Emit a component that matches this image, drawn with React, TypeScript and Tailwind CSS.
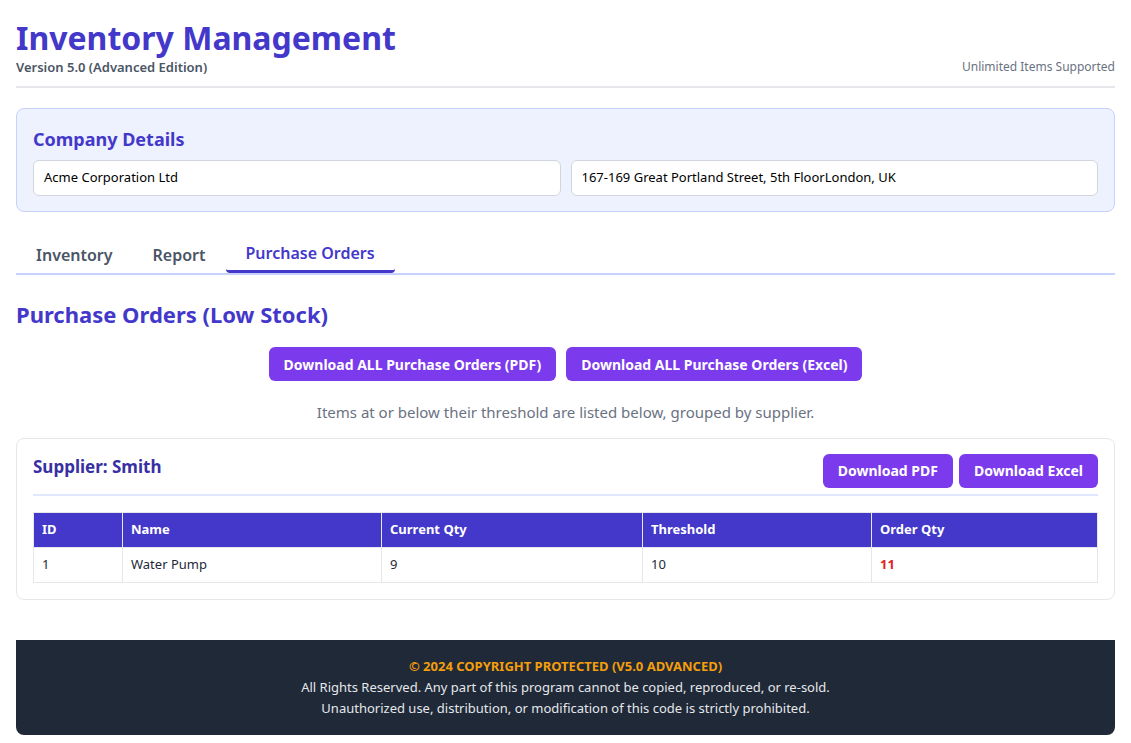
export default function App() {
  const btn = "bg-[#7c3aed] text-white font-bold text-[14px] rounded-md px-[15px] h-[34px] [font-family:'Liberation_Sans',Arial,sans-serif]";
  return (
    <div className="min-h-screen bg-white px-4 [font-family:'Noto_Sans',sans-serif] text-gray-800">
      <div className="pt-[18px] flex items-end justify-between border-b-2 border-gray-200 pb-[10px]">
        <div>
          <h1 className="text-[32px] leading-[40px] font-bold text-[#4338ca]">Inventory Management</h1>
          <div className="text-[13px] font-semibold text-gray-600 leading-[18px]">Version 5.0 (Advanced Edition)</div>
        </div>
        <div className="text-[12px] text-gray-500">Unlimited Items Supported</div>
      </div>
      <div className="mt-5 bg-[#eef2ff] border border-[#c7d2fe] rounded-lg px-4 pt-[17px] pb-[15px]">
        <h2 className="text-[18px] font-bold text-[#4338ca] leading-[26px] mb-[8px]">Company Details</h2>
        <div className="flex gap-[10px]">
          <div className="flex-1 h-[36px] bg-white border border-gray-300 rounded-md px-[10px] flex items-center text-[13px] text-black [font-family:'Liberation_Sans',Arial,sans-serif]">Acme Corporation Ltd</div>
          <div className="flex-1 h-[36px] bg-white border border-gray-300 rounded-md px-[10px] flex items-center text-[13px] text-black [font-family:'Liberation_Sans',Arial,sans-serif]">167-169 Great Portland Street, 5th FloorLondon, UK</div>
        </div>
      </div>
      <div className="mt-[24px] flex border-b-2 border-[#c7d2fe] text-[16px] font-semibold">
        <div className="px-5 h-[37px] flex items-center text-gray-600">Inventory</div>
        <div className="px-5 h-[37px] flex items-center text-gray-600">Report</div>
        <div className="px-5 h-[37px] flex items-center text-[#4338ca] border-b-[3px] border-[#4338ca] rounded-b-sm -mb-[2px]">Purchase Orders</div>
      </div>
      <h2 className="mt-[24px] text-[22px] font-bold text-[#4338ca] leading-[30px]">Purchase Orders (Low Stock)</h2>
      <div className="mt-[18px] flex justify-center gap-[10px]">
        <button className={btn}>Download ALL Purchase Orders (PDF)</button>
        <button className={btn}>Download ALL Purchase Orders (Excel)</button>
      </div>
      <p className="mt-[20px] text-center text-[15px] text-gray-500">Items at or below their threshold are listed below, grouped by supplier.</p>
      <div className="mt-[14px] border border-gray-200 rounded-lg px-4 pt-[15px] pb-[16px]">
        <div className="flex justify-between items-start border-b-2 border-[#e0e7ff] pb-[6px]">
          <h3 className="text-[17px] font-bold text-[#3730a3] leading-[26px]">Supplier: Smith</h3>
          <div className="flex gap-[6px]">
            <button className={btn}>Download PDF</button>
            <button className={btn}>Download Excel</button>
          </div>
        </div>
        <table className="mt-[16px] w-full border-collapse text-[13px]">
          <thead>
            <tr className="bg-[#4338ca] text-white text-left h-[35px]">
              <th className="px-2 border border-gray-200 w-[89px]">ID</th>
              <th className="px-2 border border-gray-200 w-[259px]">Name</th>
              <th className="px-2 border border-gray-200 w-[261px]">Current Qty</th>
              <th className="px-2 border border-gray-200 w-[229px]">Threshold</th>
              <th className="px-2 border border-gray-200">Order Qty</th>
            </tr>
          </thead>
          <tbody>
            <tr className="h-[35px]">
              <td className="px-2 border border-gray-200">1</td>
              <td className="px-2 border border-gray-200">Water Pump</td>
              <td className="px-2 border border-gray-200">9</td>
              <td className="px-2 border border-gray-200">10</td>
              <td className="px-2 border border-gray-200 text-[#dc2626] font-bold">11</td>
            </tr>
          </tbody>
        </table>
      </div>
      <footer className="mt-[40px] bg-[#1f2937] rounded-b-lg py-[16px] text-center text-[13px] leading-[21px] text-gray-200">
        <div className="font-bold text-[#f59e0b]">© 2024 COPYRIGHT PROTECTED (V5.0 ADVANCED)</div>
        <div>All Rights Reserved. Any part of this program cannot be copied, reproduced, or re-sold.</div>
        <div>Unauthorized use, distribution, or modification of this code is strictly prohibited.</div>
      </footer>
      <div className="h-[10px]" />
    </div>
  );
}
